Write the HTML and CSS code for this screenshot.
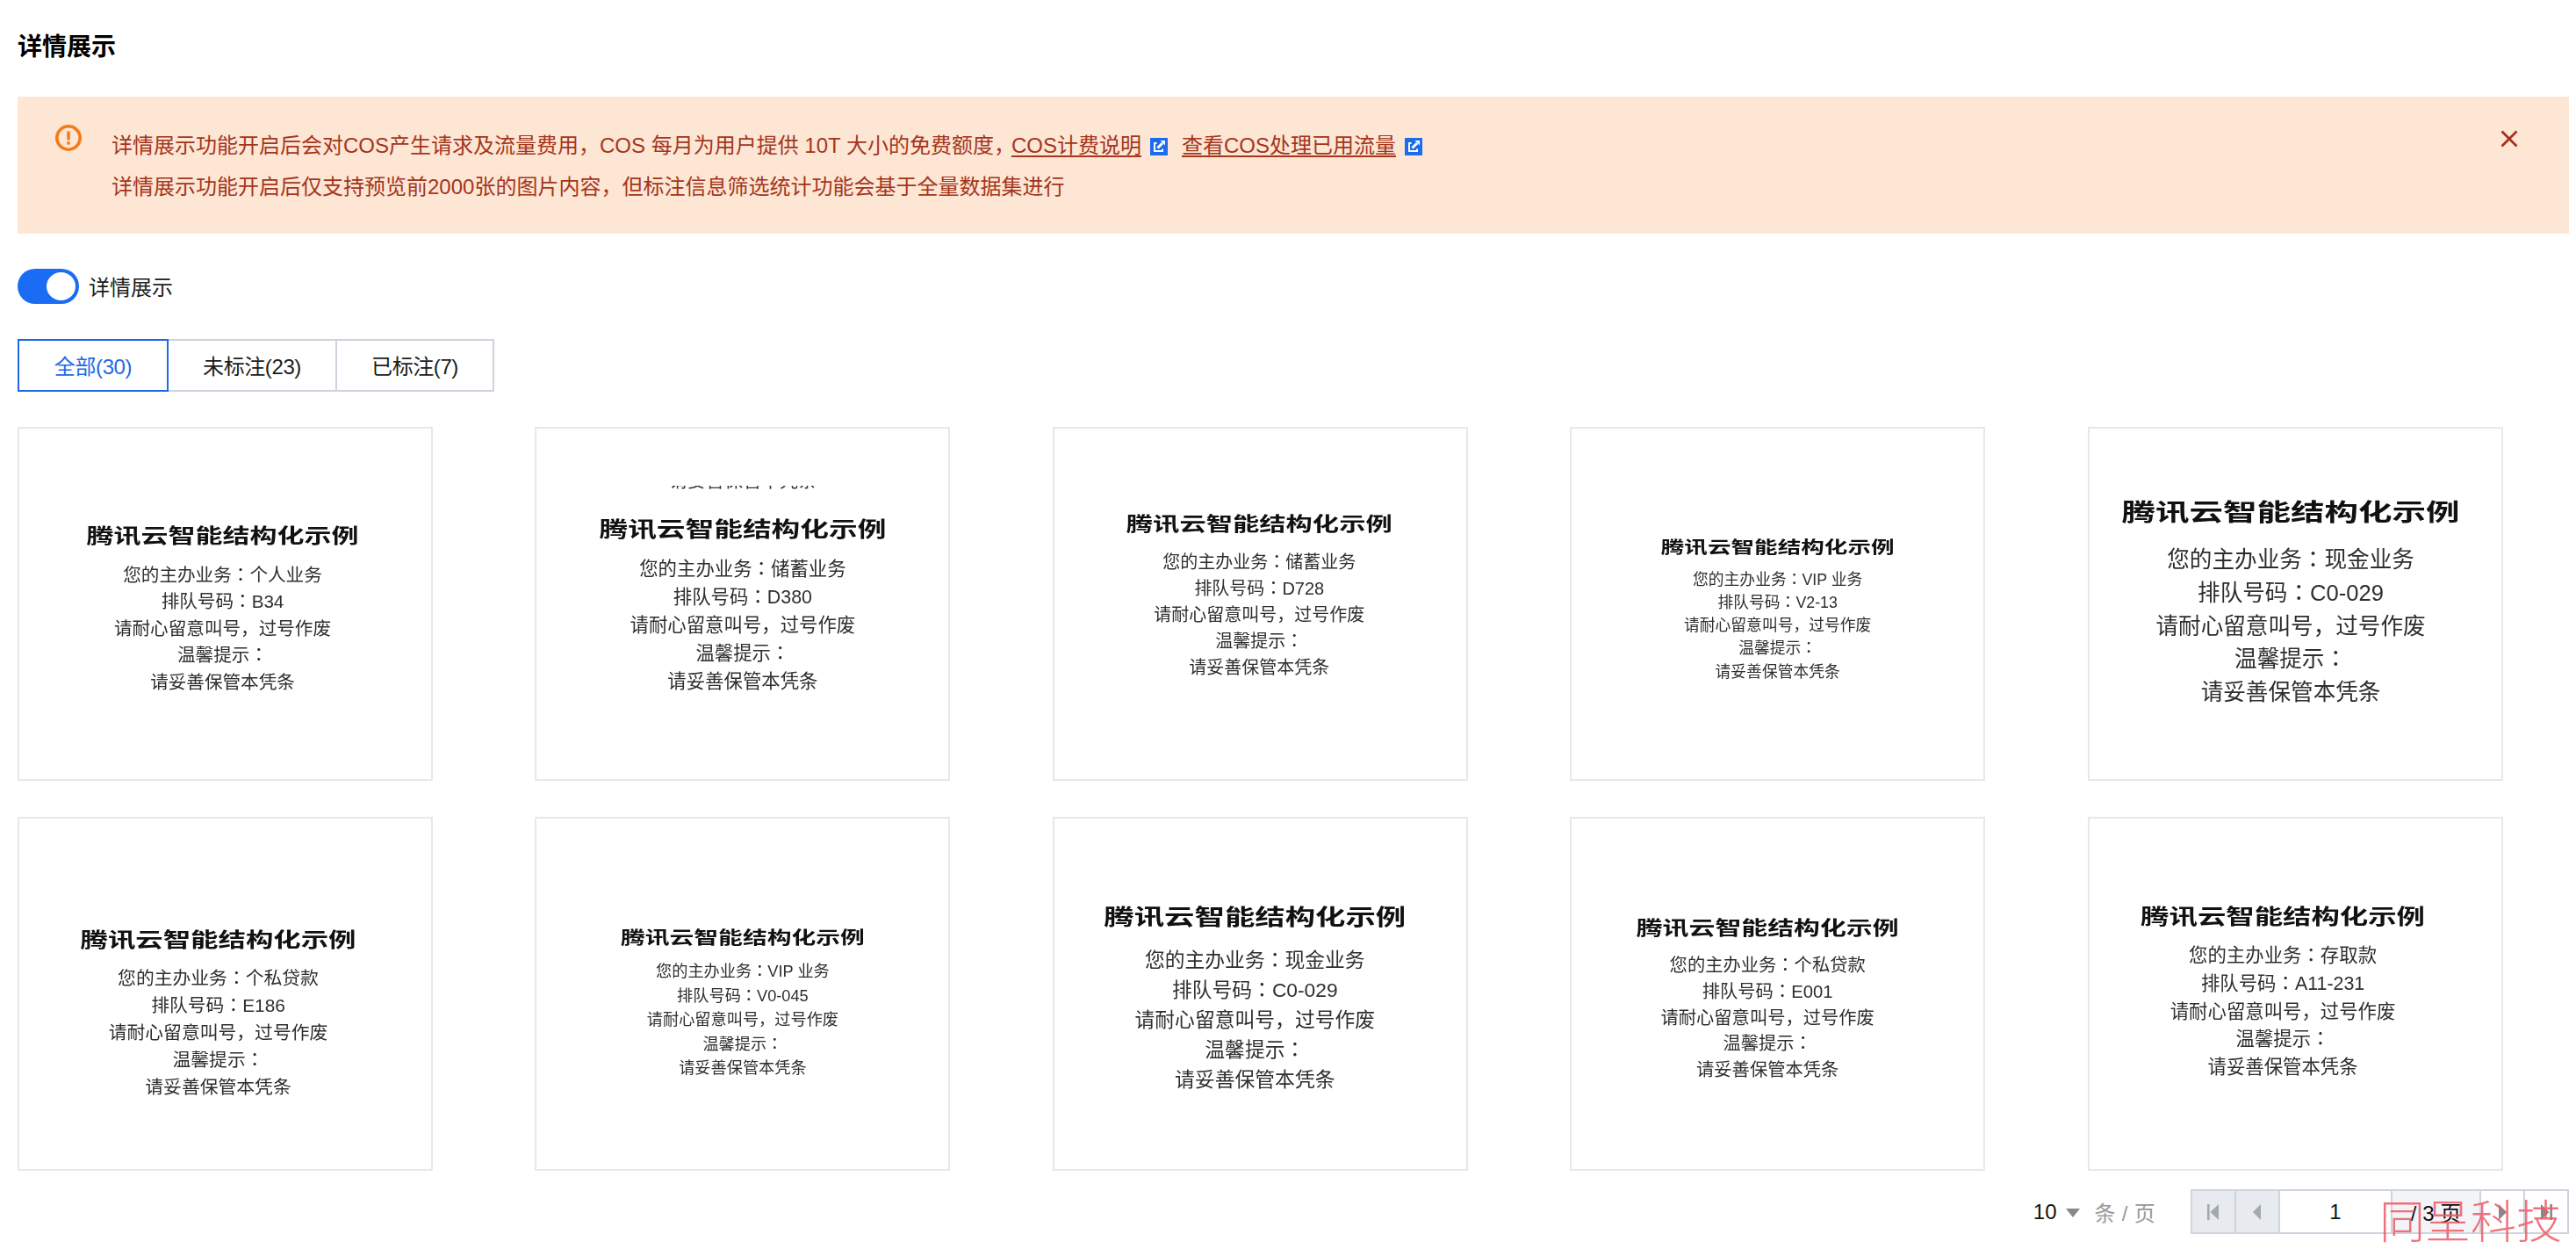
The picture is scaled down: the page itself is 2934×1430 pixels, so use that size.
FILE: index.html
```html
<!DOCTYPE html>
<html lang="zh-CN">
<head>
  <meta charset="UTF-8" />
  <title>详情展示</title>
  <link rel="stylesheet" href="styles.css">
</head>
<body>
  <div class="page">
    <!-- Title -->
    <h1 class="title">详情展示</h1>

    <!-- Notice -->
    <div class="notice">
      <svg class="notice-icon" viewBox="0 0 30 30">
        <circle cx="15" cy="15" r="13.2" fill="none" stroke="#f47a16" stroke-width="3.6"/>
        <rect x="13.3" y="7.5" width="3.4" height="10" fill="#f47a16"/>
        <rect x="13.3" y="19.2" width="3.4" height="3.4" fill="#f47a16"/>
      </svg>
      <div class="notice-text">
        <p>详情展示功能开启后会对COS产生请求及流量费用，COS 每月为用户提供 10T 大小的免费额度，<a class="link-first" href="#">COS计费说明</a><svg class="ext-icon" viewBox="0 0 20 20"><rect width="20" height="20" fill="#1b6cf0"/><path d="M7.5 6H5v9h9v-2.5" fill="none" stroke="#fff" stroke-width="2"/><path d="M8.5 11.5 14 6" stroke="#fff" stroke-width="3"/><path d="M11.5 3H17v5.5z" fill="#fff"/></svg><a href="#">查看COS处理已用流量</a><svg class="ext-icon" viewBox="0 0 20 20"><rect width="20" height="20" fill="#1b6cf0"/><path d="M7.5 6H5v9h9v-2.5" fill="none" stroke="#fff" stroke-width="2"/><path d="M8.5 11.5 14 6" stroke="#fff" stroke-width="3"/><path d="M11.5 3H17v5.5z" fill="#fff"/></svg></p>
        <p>详情展示功能开启后仅支持预览前2000张的图片内容，但标注信息筛选统计功能会基于全量数据集进行</p>
      </div>
      <svg class="notice-close" viewBox="0 0 20 20">
        <path d="M1.5 1.5 18.5 18.5M18.5 1.5 1.5 18.5" stroke="#a5321a" stroke-width="2.8"/>
      </svg>
    </div>

    <!-- Switch -->
    <div class="switch-row">
      <span class="switch"><span class="switch-knob"></span></span>
      <span class="switch-label">详情展示</span>
    </div>

    <!-- Tabs -->
    <div class="tabs">
      <div class="tab tab-all active">全部(30)</div>
      <div class="tab tab-todo">未标注(23)</div>
      <div class="tab tab-done">已标注(7)</div>
    </div>

    <!-- Thumbnails -->
    <div class="grid">
      <div class="card thumb-1">
        <div class="card-title">腾讯云智能结构化示例</div>
        <p>您的主办业务<span class="mid">：</span>个人业务</p><p>排队号码<span class="mid">：</span>B34</p><p>请耐心留意叫号，过号作废</p><p>温馨提示<span class="mid">：</span></p><p>请妥善保管本凭条</p>
      </div>
      <div class="card thumb-2">
        <div class="clipped clipped-2"><span>请妥善保管本凭条</span></div>
        <div class="card-title">腾讯云智能结构化示例</div>
        <p>您的主办业务<span class="mid">：</span>储蓄业务</p><p>排队号码<span class="mid">：</span>D380</p><p>请耐心留意叫号，过号作废</p><p>温馨提示<span class="mid">：</span></p><p>请妥善保管本凭条</p>
      </div>
      <div class="card thumb-3">
        <div class="card-title">腾讯云智能结构化示例</div>
        <p>您的主办业务<span class="mid">：</span>储蓄业务</p><p>排队号码<span class="mid">：</span>D728</p><p>请耐心留意叫号，过号作废</p><p>温馨提示<span class="mid">：</span></p><p>请妥善保管本凭条</p>
      </div>
      <div class="card thumb-4">
        <div class="card-title">腾讯云智能结构化示例</div>
        <p>您的主办业务<span class="mid">：</span>VIP 业务</p><p>排队号码<span class="mid">：</span>V2-13</p><p>请耐心留意叫号，过号作废</p><p>温馨提示<span class="mid">：</span></p><p>请妥善保管本凭条</p>
      </div>
      <div class="card thumb-5">
        <div class="card-title">腾讯云智能结构化示例</div>
        <p>您的主办业务<span class="mid">：</span>现金业务</p><p>排队号码<span class="mid">：</span>C0-029</p><p>请耐心留意叫号，过号作废</p><p>温馨提示<span class="mid">：</span></p><p>请妥善保管本凭条</p>
      </div>
      <div class="card thumb-6">
        <div class="card-title">腾讯云智能结构化示例</div>
        <p>您的主办业务<span class="mid">：</span>个私贷款</p><p>排队号码<span class="mid">：</span>E186</p><p>请耐心留意叫号，过号作废</p><p>温馨提示<span class="mid">：</span></p><p>请妥善保管本凭条</p>
      </div>
      <div class="card thumb-7">
        <div class="clipped clipped-7"><span>请妥善保管本凭条</span></div>
        <div class="card-title">腾讯云智能结构化示例</div>
        <p>您的主办业务<span class="mid">：</span>VIP 业务</p><p>排队号码<span class="mid">：</span>V0-045</p><p>请耐心留意叫号，过号作废</p><p>温馨提示<span class="mid">：</span></p><p>请妥善保管本凭条</p>
      </div>
      <div class="card thumb-8">
        <div class="card-title">腾讯云智能结构化示例</div>
        <p>您的主办业务<span class="mid">：</span>现金业务</p><p>排队号码<span class="mid">：</span>C0-029</p><p>请耐心留意叫号，过号作废</p><p>温馨提示<span class="mid">：</span></p><p>请妥善保管本凭条</p>
      </div>
      <div class="card thumb-9">
        <div class="card-title">腾讯云智能结构化示例</div>
        <p>您的主办业务<span class="mid">：</span>个私贷款</p><p>排队号码<span class="mid">：</span>E001</p><p>请耐心留意叫号，过号作废</p><p>温馨提示<span class="mid">：</span></p><p>请妥善保管本凭条</p>
      </div>
      <div class="card thumb-10">
        <div class="card-title">腾讯云智能结构化示例</div>
        <p>您的主办业务<span class="mid">：</span>存取款</p><p>排队号码<span class="mid">：</span>A11-231</p><p>请耐心留意叫号，过号作废</p><p>温馨提示<span class="mid">：</span></p><p>请妥善保管本凭条</p>
      </div>
    </div>

    <!-- Pagination -->
    <div class="pagination">
      <span class="page-size">10</span>
      <span class="page-caret"></span>
      <span class="page-unit">条 / 页</span>
      <div class="pager">
        <div class="pager-btn disabled">
          <svg viewBox="0 0 16 24" class="pager-icon"><path d="M1 3h2.6v18H1z M14 3v18L4.5 12z" fill="#a3a9b0"/></svg>
        </div>
        <div class="pager-btn disabled">
          <svg viewBox="0 0 16 24" class="pager-icon"><path d="M12 3v18L3 12z" fill="#a3a9b0"/></svg>
        </div>
        <div class="pager-input">1</div>
        <div class="pager-total">/ 3 页</div>
        <div class="pager-btn">
          <svg viewBox="0 0 16 24" class="pager-icon"><path d="M4 3v18l9-9z" fill="#888"/></svg>
        </div>
        <div class="pager-btn">
          <svg viewBox="0 0 16 24" class="pager-icon"><path d="M2 3v18l9.5-9z M12.4 3H15v18h-2.6z" fill="#888"/></svg>
        </div>
      </div>
    </div>
  </div>

  <!-- Watermark -->
  <div class="watermark">同呈科技</div>
</body>
</html>
```

FILE: styles.css
```css
/* Global Reset */
* { margin: 0; padding: 0; box-sizing: border-box; }
html, body { height: 100%; background: #fff; }
body {
  position: relative;
  overflow: hidden;
  font-family: "Liberation Sans", "Noto Sans CJK SC", sans-serif;
  font-size: 24px;
  color: #1c1c1c;
}
.page { padding: 34px 8px 0 20px; }

/* Title */
.title {
  font-size: 28px;
  line-height: 40px;
  font-weight: 700;
  color: #000;
}

/* Notice */
.notice {
  display: flex;
  align-items: flex-start;
  height: 156px;
  margin-top: 36px;
  padding: 32px 58px 0 43px;
  background: #fde6d4;
  color: #a5351c;
}
.notice-icon { flex: none; width: 30px; height: 30px; }
.notice-text { flex: 1; margin-left: 34px; line-height: 47px; }
.notice-text a { color: #a5351c; text-decoration: underline; text-underline-offset: 3px; }
.link-first { margin-left: -4px; }
.ext-icon {
  width: 20px;
  height: 20px;
  margin: 0 16px 0 10px;
  vertical-align: -3px;
}
.notice-close { flex: none; width: 20px; height: 20px; margin-top: 6px; }

/* Switch */
.switch-row {
  display: flex;
  align-items: center;
  gap: 11px;
  height: 40px;
  margin-top: 40px;
}
.switch {
  display: flex;
  justify-content: flex-end;
  align-items: center;
  width: 70px;
  height: 40px;
  padding-right: 4px;
  border-radius: 20px;
  background: #1a6cf5;
}
.switch-knob { width: 33px; height: 32px; border-radius: 50%; background: #fff; }
.switch-label { padding-bottom: 2px; }

/* Tabs */
.tabs { display: flex; height: 60px; margin-top: 40px; }
.tab {
  display: flex;
  align-items: center;
  justify-content: center;
  margin-right: -2px;
  padding-bottom: 2px;
  border: 2px solid #ced3dd;
  color: #1c1c1c;
  letter-spacing: -0.4px;
}
.tab-all { width: 172px; }
.tab-todo { width: 194px; }
.tab-done { width: 181px; }
.tab.active { position: relative; border-color: #1d6ae5; color: #1d6ae5; }

/* Thumbnails */
.grid {
  display: grid;
  grid-template-columns: repeat(5, 473px);
  grid-auto-rows: 403px;
  column-gap: 116.4px;
  row-gap: 41px;
  margin-top: 40px;
}
.card {
  position: relative;
  overflow: hidden;
  padding-top: calc(var(--tc) - var(--title) / 2);
  padding-right: var(--shift, 0);
  border: 2px solid #e8e8e8;
  text-align: center;
  font-size: var(--body);
  line-height: var(--line);
  color: #2e2e2e;
}
.card p { filter: blur(0.5px); white-space: nowrap; }
/* the scans centre the colon in its cell, as the TC glyph does */
.mid {
  font-family: "Noto Sans CJK TC", sans-serif;
  font-feature-settings: "locl" 0;
  line-height: 0;
}
.card-title {
  margin-bottom: calc(var(--gap) - var(--title) / 2 - var(--line) / 2);
  font-size: var(--title);
  line-height: 1;
  font-weight: 700;
  color: #111;
  white-space: nowrap;
  transform: scaleY(0.72);
  filter: blur(0.6px);
}
.clipped {
  position: absolute;
  left: 0;
  right: 0;
  display: flex;
  justify-content: center;
  align-items: flex-end;
  overflow: hidden;
  color: #333;
  filter: blur(0.5px);
}
.clipped-2 { top: 65px; height: 8px; font-size: 21px; line-height: 1.35; }
.clipped-7 { top: 71px; height: 2px; font-size: 16px; line-height: 1.3; }

/* one scan each, so the text sits at another size and height on every card */
.thumb-1 { --title: 31px; --body: 20.6px; --line: 30.5px; --tc: 122px; --gap: 45px; --shift: 6px; }
.thumb-2 { --title: 32.7px; --body: 21.4px; --line: 32px; --tc: 115px; --gap: 45px; }
.thumb-3 { --title: 30.3px; --body: 20px; --line: 30px; --tc: 109px; --gap: 43px; --shift: 2px; }
.thumb-4 { --title: 26.6px; --body: 17.8px; --line: 26.2px; --tc: 135px; --gap: 37px; }
.thumb-5 { --title: 38.5px; --body: 25.6px; --line: 37.8px; --tc: 96px; --gap: 54px; --shift: 10px; }
.thumb-6 { --title: 31.4px; --body: 20.8px; --line: 31px; --tc: 139px; --gap: 42px; --shift: 16px; }
.thumb-7 { --title: 27.8px; --body: 18.2px; --line: 27.5px; --tc: 137px; --gap: 38px; }
.thumb-8 { --title: 34.4px; --body: 22.8px; --line: 34px; --tc: 112px; --gap: 49px; --shift: 12px; }
.thumb-9 { --title: 29.9px; --body: 20.3px; --line: 29.8px; --tc: 125px; --gap: 43px; --shift: 23px; }
.thumb-10 { --title: 32.4px; --body: 21.4px; --line: 31.8px; --tc: 112px; --gap: 45px; --shift: 28px; }

/* Pagination */
.pagination {
  display: flex;
  align-items: center;
  justify-content: flex-end;
  height: 51px;
  margin-top: 21px;
}
.page-size { color: #111; }
.page-caret {
  width: 0;
  height: 0;
  margin: 3px 16px 0 11px;
  border-left: 8px solid transparent;
  border-right: 8px solid transparent;
  border-top: 10px solid #888;
}
.page-unit { margin-right: 40px; color: #999; letter-spacing: 0.3px; }
.pager { display: flex; height: 51px; border: 2px solid #ced3dd; }
.pager-btn {
  display: flex;
  align-items: center;
  justify-content: center;
  width: 50px;
  border-right: 2px solid #ced3dd;
}
.pager-btn:last-child { border-right: 0; width: 48px; }
.pager-btn.disabled { background: #e7eaef; }
.pager-icon { width: 16px; height: 24px; }
.pager-input {
  display: flex;
  align-items: center;
  justify-content: center;
  width: 128px;
  border-right: 2px solid #ced3dd;
  color: #111;
}
.pager-total {
  display: flex;
  align-items: center;
  justify-content: center;
  width: 101px;
  border-right: 2px solid #ced3dd;
  background: #f3f4f8;
  color: #111;
}

/* Watermark */
.watermark {
  position: absolute;
  right: 16px;
  top: 1358px;
  font-size: 52px;
  line-height: 60px;
  font-weight: 300;
  color: #ee5a66;
  opacity: 0.85;
  font-family: "Noto Sans CJK SC", sans-serif;
}
```
